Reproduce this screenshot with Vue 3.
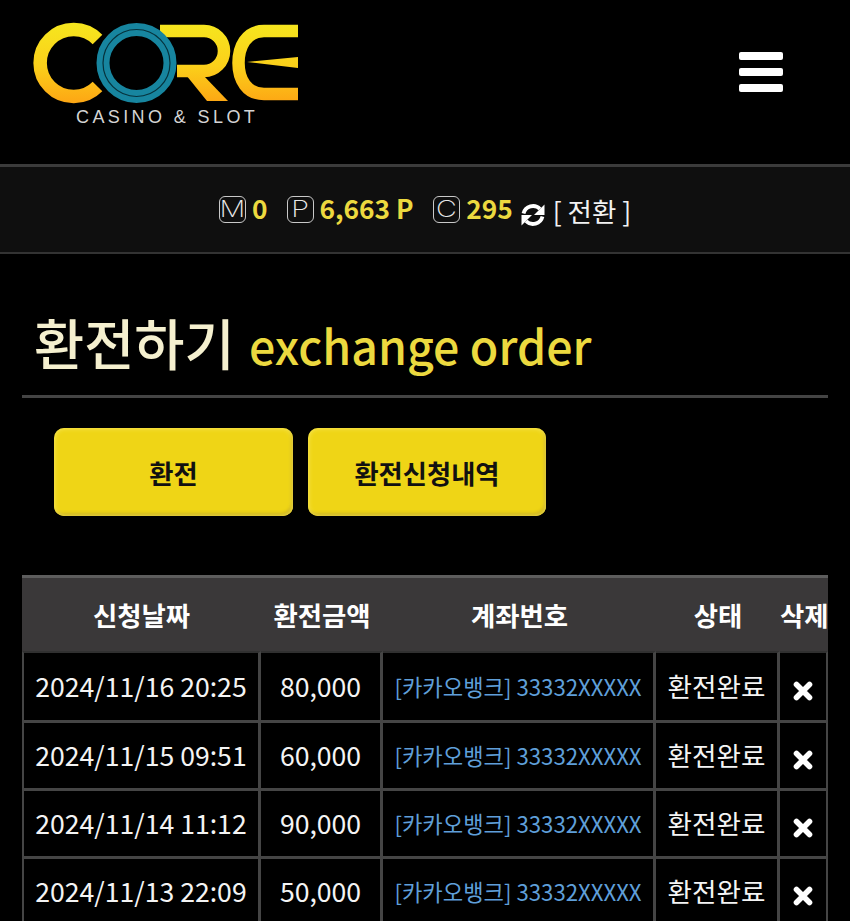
<script setup>
const columns = ['신청날짜', '환전금액', '계좌번호', '상태', '삭제']
const rows = [
  { date: '2024/11/16 20:25', amount: '80,000' },
  { date: '2024/11/15 09:51', amount: '60,000' },
  { date: '2024/11/14 11:12', amount: '90,000' },
  { date: '2024/11/13 22:09', amount: '50,000' },
]
</script>

<template>
  <div class="page">
    <header class="top">
      <svg class="logo" width="300" height="130" viewBox="0 0 300 130" aria-label="CORE">
        <defs>
          <linearGradient id="gold" gradientUnits="userSpaceOnUse" x1="0" y1="24" x2="0" y2="102">
            <stop offset="0" stop-color="#f6e61e" />
            <stop offset="0.55" stop-color="#fbcf1a" />
            <stop offset="1" stop-color="#fda714" />
          </linearGradient>
        </defs>
        <path d="M97.500 39.500 A33.500 33.500 0 1 0 97.500 86.500" fill="none" stroke="url(#gold)" stroke-width="13.500" />
        <path d="M160 31 H204 A20 20 0 0 1 204 71 H177" fill="none" stroke="url(#gold)" stroke-width="12.500" />
        <path d="M182 70 L207 101 H228 L203 75 Z" fill="url(#gold)" />
        <path d="M298 31 H264 C246 31 238.500 47 238.500 63 C238.500 80 247 94 264 94 H298" fill="none" stroke="url(#gold)" stroke-width="12.500" />
        <path d="M247 62 L298 57 V68 Z" fill="url(#gold)" />
        <circle cx="136.500" cy="63" r="33.500" fill="none" stroke="#17859f" stroke-width="13" />
        <circle cx="136.500" cy="63" r="33.500" fill="none" stroke="#06323c" stroke-width="1.200" />
        <text x="76" y="123" class="tagline">CASINO &amp; SLOT</text>
      </svg>
      <div class="burger"><i></i><i></i><i></i></div>
    </header>

    <section class="wallet">
      <span class="chip"><em>M</em></span><b class="val m0">0</b>
      <span class="chip"><em>P</em></span><b class="val m1">6,663 P</b>
      <span class="chip"><em>C</em></span><b class="val m2">295</b>
      <svg class="swap" width="26" height="26" viewBox="0 0 26 26">
        <path d="M3.500 11.500 A9.800 9.800 0 0 1 20 7" fill="none" stroke="#fff" stroke-width="3.800" />
        <path d="M24.500 2.500 V13 H14 Z" fill="#fff" />
        <path d="M22.500 14.500 A9.800 9.800 0 0 1 6 19" fill="none" stroke="#fff" stroke-width="3.800" />
        <path d="M1.500 23.500 V13 H12 Z" fill="#fff" />
      </svg>
      <span class="convert">[ 전환 ]</span>
    </section>

    <h1 class="title"><span class="ko">환전하기</span><span class="en">exchange order</span></h1>

    <div class="actions">
      <button class="btn">환전</button>
      <button class="btn">환전신청내역</button>
    </div>

    <table class="grid">
      <colgroup>
        <col class="c1" /><col class="c2" /><col class="c3" /><col class="c4" /><col class="c5" />
      </colgroup>
      <thead>
        <tr><th v-for="c in columns" :key="c">{{ c }}</th></tr>
      </thead>
      <tbody>
        <tr v-for="r in rows" :key="r.date">
          <td>{{ r.date }}</td>
          <td>{{ r.amount }}</td>
          <td class="acct">[카카오뱅크] 33332XXXXX</td>
          <td>환전완료</td>
          <td>
            <svg class="del" width="20" height="20" viewBox="0 0 20 20">
              <path d="M3.500 3.500 L16.500 16.500 M16.500 3.500 L3.500 16.500" stroke="#fff" stroke-width="5.600" stroke-linecap="round" />
            </svg>
          </td>
        </tr>
      </tbody>
    </table>
  </div>
</template>

<style>
html, body { margin: 0; background: #000; overflow: hidden; }
</style>

<style scoped>
.page {
  width: 850px;
  height: 921px;
  overflow: hidden;
  background: #000;
  color: #fff;
  font-family: "Noto Sans CJK KR", "Noto Sans", sans-serif;
}
.top {
  height: 164px;
  display: flex;
  justify-content: space-between;
  align-items: flex-start;
  padding-right: 67px;
  box-sizing: border-box;
}
.logo { display: block; }
.tagline {
  font-family: "Liberation Sans", sans-serif;
  font-size: 18px;
  letter-spacing: 3.400px;
  fill: #d4d4d4;
}
.burger {
  margin-top: 52px;
  width: 44px;
  height: 40px;
  display: flex;
  flex-direction: column;
  justify-content: space-between;
}
.burger i {
  display: block;
  height: 8px;
  border-radius: 2px;
  background: #fff;
}
.wallet {
  height: 85px;
  background: #0f0f0f;
  border-top: 3px solid #3b3b3b;
  border-bottom: 2px solid #333;
  display: flex;
  align-items: center;
  padding-left: 219px;
}
.chip {
  width: 27px;
  height: 27px;
  box-sizing: border-box;
  border: 1.500px solid #c9c9c9;
  border-radius: 6px;
  display: flex;
  align-items: center;
  justify-content: center;
  margin-top: -1px;
}
.chip em {
  font-family: "Inter", sans-serif;
  font-style: normal;
  font-weight: 200;
  font-size: 23px;
  line-height: 1;
  color: #e8e8e8;
  transform: scaleX(1.250);
}
.val {
  font-size: 26.300px;
  font-weight: 700;
  line-height: 1;
  color: #ecd93f;
  margin-left: 6px;
  margin-top: -2px;
}
.m0 { margin-right: 19px; }
.m1 { margin-right: 19.500px; }
.m2 { margin-right: 7px; }
.swap { margin-top: 10px; }
.convert {
  font-size: 26.500px;
  line-height: 1;
  color: #f2f2f2;
  margin-left: 7px;
  margin-top: 4px;
}
.title {
  margin: 0 22px;
  height: 144px;
  box-sizing: border-box;
  border-bottom: 3px solid #444;
  padding: 55px 0 0 12px;
  display: flex;
  align-items: baseline;
  font-weight: 500;
  line-height: 1.2;
}
.ko { font-size: 54.500px; color: #f5f0cf; }
.en { font-size: 46.500px; color: #ecd93f; margin-left: 14.500px; }
.actions {
  display: flex;
  gap: 15px;
  padding: 30px 0 59px 54px;
}
.btn {
  width: 239px;
  height: 88px;
  padding: 0;
  border: 0;
  border-radius: 10px;
  background: #efd516;
  box-shadow: inset 0 0 5px #f9ea6a, inset -2px -3px 3px #c9ae12;
  font-family: inherit;
  font-size: 26.300px;
  font-weight: 700;
  color: #111;
}
.btn + .btn { width: 238px; }
.grid {
  width: 806px;
  margin-left: 22px;
  table-layout: fixed;
  border-collapse: separate;
  border-spacing: 0;
}
.c1 { width: 239px; }
.c2 { width: 122px; }
.c3 { width: 273px; }
.c4 { width: 124px; }
.c5 { width: 48px; }
th {
  height: 76px;
  box-sizing: border-box;
  padding: 0;
  background: #3a3839;
  border-top: 3px solid #5d5d5d;
  font-size: 26.400px;
  font-weight: 700;
  color: #fff;
  white-space: nowrap;
}
td {
  height: 68px;
  box-sizing: border-box;
  padding: 0;
  border-right: 3px solid #454545;
  border-bottom: 3px solid #454545;
  text-align: center;
  font-size: 26.600px;
  line-height: 1;
  color: #f4f4f4;
  white-space: nowrap;
}
td:first-child { border-left: 2px solid #454545; }
td:last-child { border-right-width: 2px; }
tbody tr:first-child td {
  height: 72px;
  border-top: 2px solid #303030;
}
td.acct {
  font-size: 22.200px;
  color: #5f9fd9;
}
.del { display: block; margin: 9px auto 0; }
</style>
